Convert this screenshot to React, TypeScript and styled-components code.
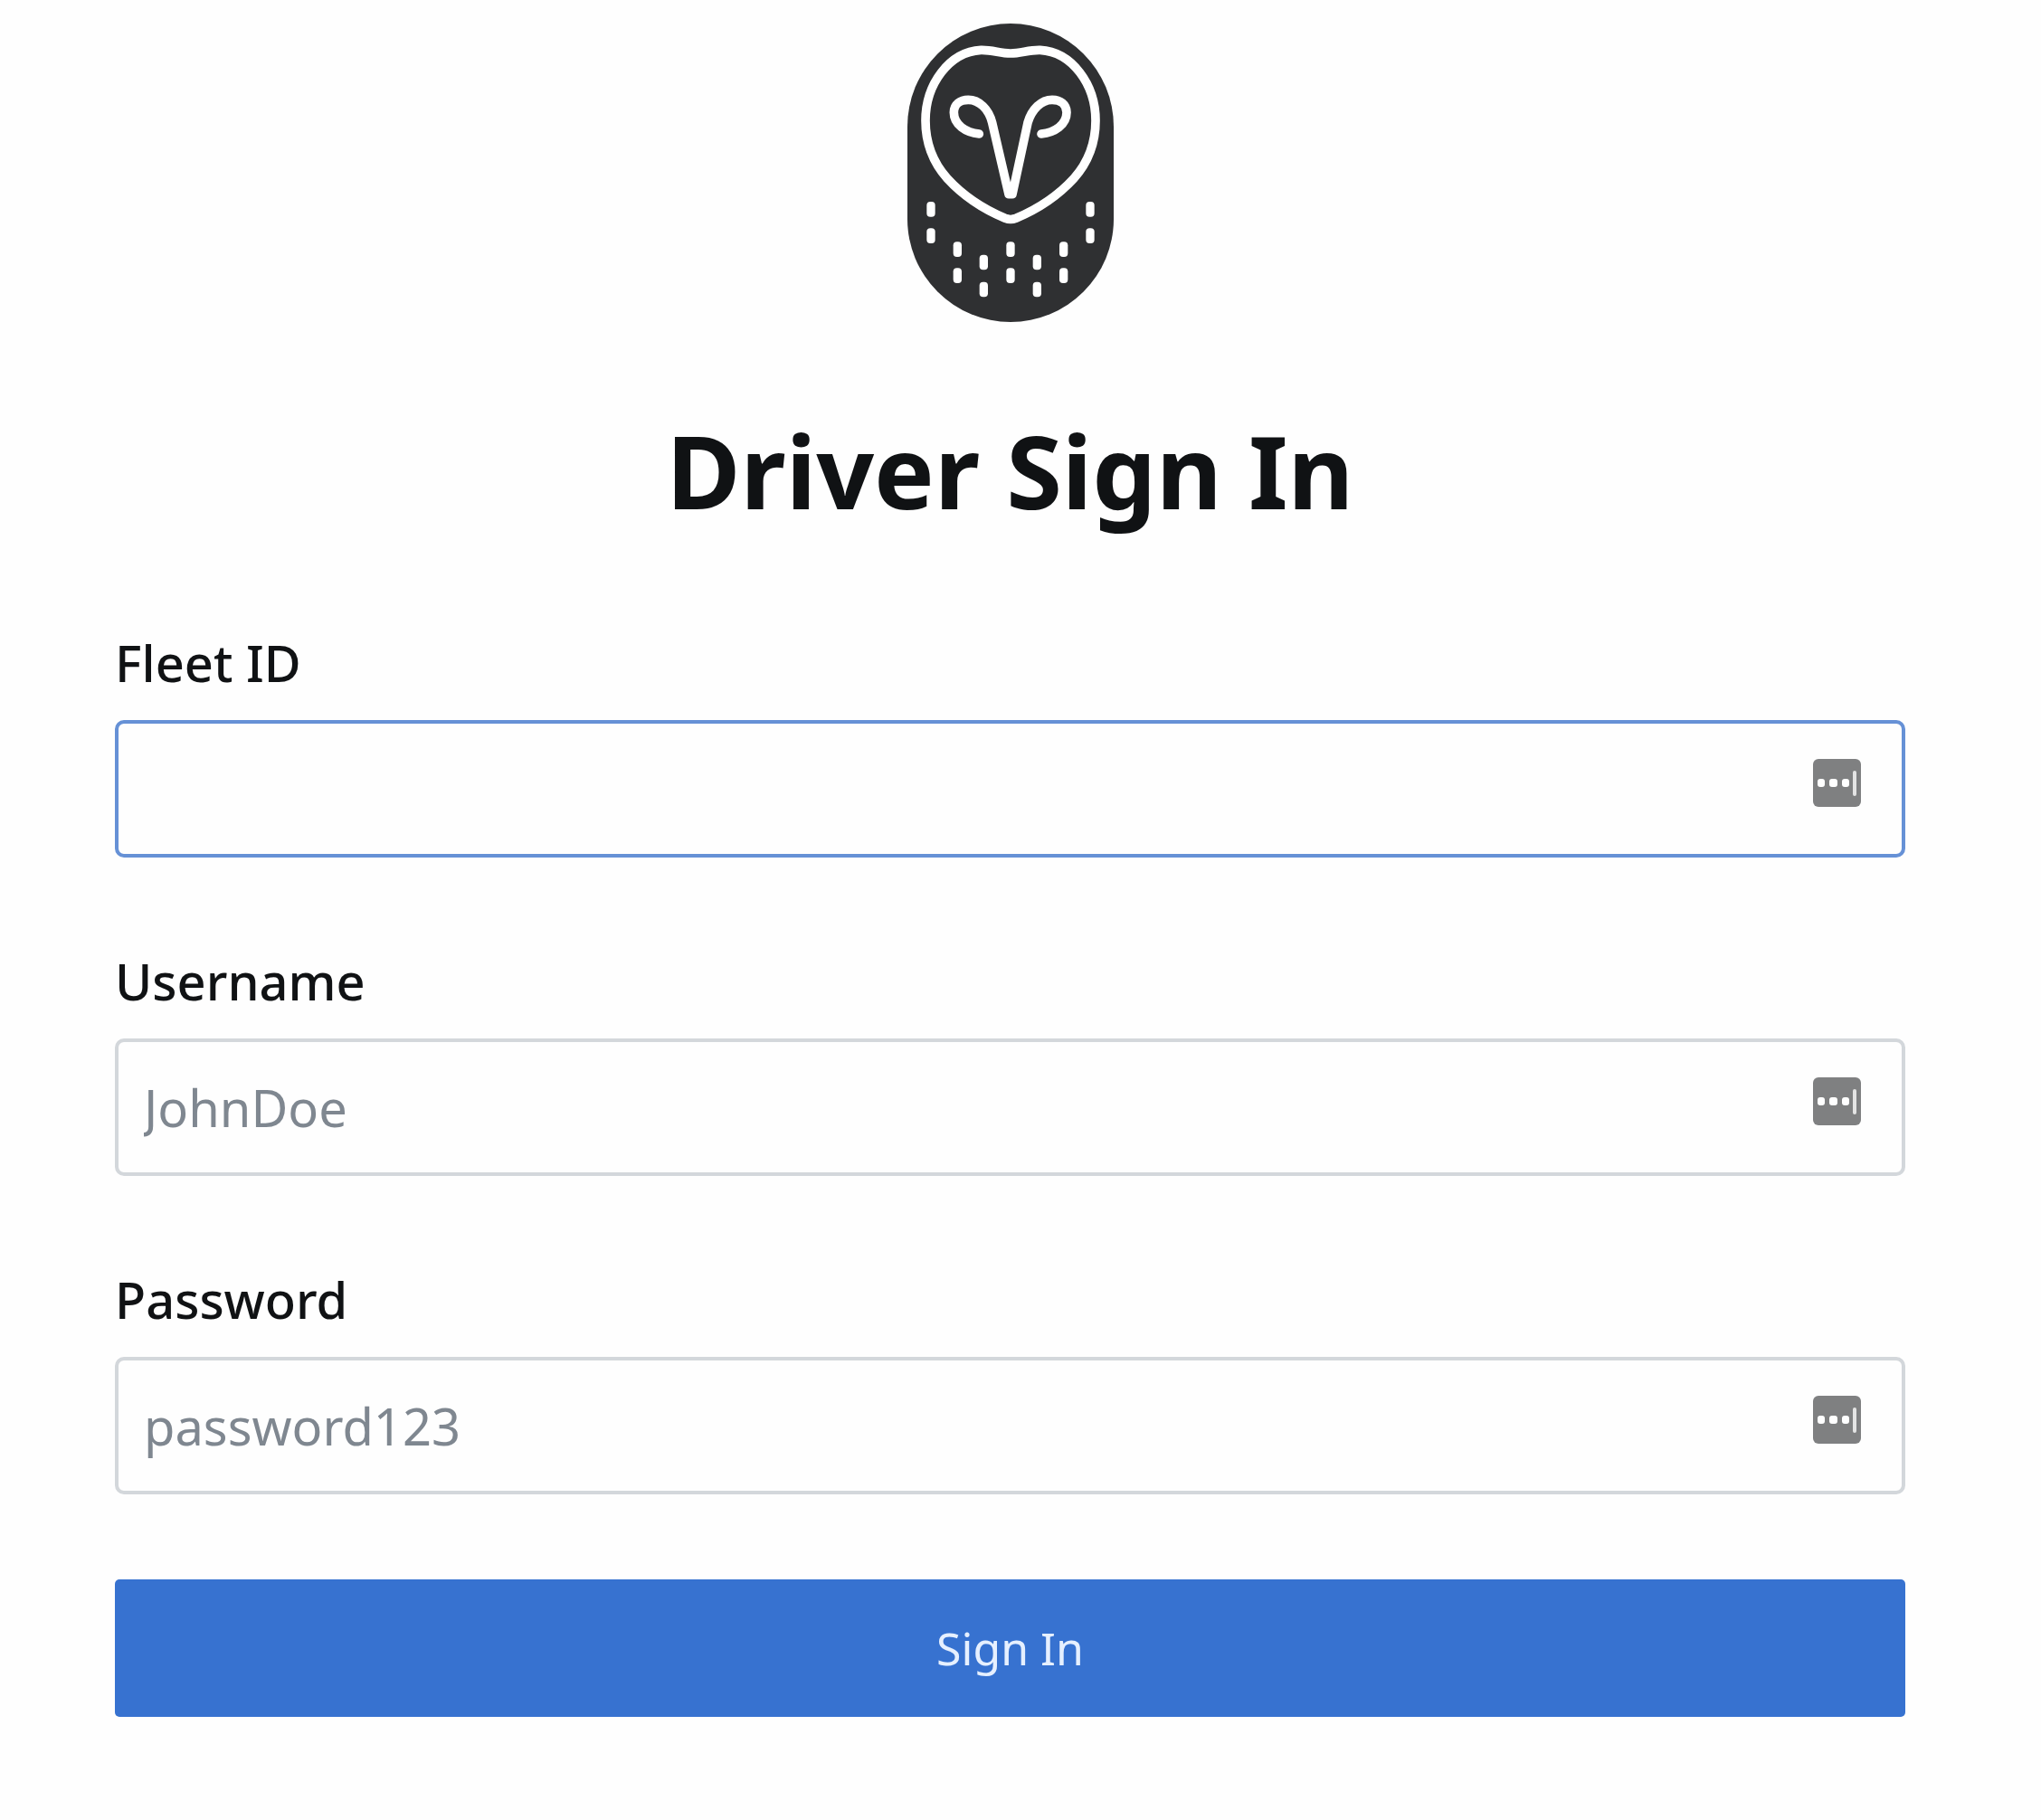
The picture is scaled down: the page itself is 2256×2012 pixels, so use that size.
import React from "react";
import styled, { createGlobalStyle } from "styled-components";

const GlobalStyle = createGlobalStyle`
  *, *::before, *::after {
    box-sizing: border-box;
  }
  body {
    margin: 0;
    background: #fefefe;
    color: #101214;
    font-family: "Noto Sans", "Open Sans", sans-serif;
  }
`;

const Page = styled.main`
  display: flex;
  flex-direction: column;
  align-items: center;
  padding: 26px 150px 112px 127px;
`;

const Logo = styled.svg`
  display: block;
  width: 228px;
  height: 330px;
  margin-bottom: 98px;
`;

const Title = styled.h1`
  margin: 0 0 114px;
  font-size: 112px;
  line-height: 132px;
  font-weight: 700;
  text-align: center;
`;

const Form = styled.form`
  display: flex;
  flex-direction: column;
  gap: 94px;
  width: 100%;
`;

const Fields = styled.div`
  display: flex;
  flex-direction: column;
  gap: 104px;
`;

const Field = styled.div`
  display: flex;
  flex-direction: column;
  gap: 32px;
`;

const Label = styled.label`
  font-size: 56px;
  line-height: 64px;
  font-weight: 500;
`;

const InputWrap = styled.div`
  position: relative;
  display: flex;
`;

const Input = styled.input<{ $active?: boolean }>`
  flex: 1;
  min-width: 0;
  height: 152px;
  padding: 0 136px 0 28px;
  border: 4px solid ${(p) => (p.$active ? "#6691d6" : "#d3d7db")};
  border-radius: 10px;
  outline: none;
  background: #fefefe;
  color: #101214;
  font-family: inherit;
  font-size: 56px;

  &::placeholder {
    color: #7f8790;
    opacity: 1;
  }
`;

const AutofillButton = styled.button`
  position: absolute;
  top: 43px;
  right: 49px;
  width: 53px;
  height: 53px;
  padding: 0;
  border: 0;
  background: none;
  cursor: pointer;

  svg {
    display: block;
    width: 100%;
    height: 100%;
  }
`;

const SubmitButton = styled.button`
  height: 152px;
  border: 0;
  border-radius: 5px;
  background: #3772d0;
  color: #e6f0ff;
  font-family: inherit;
  font-size: 50px;
  cursor: pointer;
`;

const feathers: [number, number][] = [
  [146, 664], [146, 752],
  [234, 797], [234, 884],
  [321, 840], [321, 930],
  [410, 797], [410, 884],
  [498, 840], [498, 930],
  [586, 797], [586, 884],
  [674, 664], [674, 752],
];

function OwlLogo() {
  return (
    <Logo viewBox="68 48 684 990" role="img" aria-label="Owl">
      <rect x="68" y="48" width="684" height="990" rx="342" fill="#2f3032" />
      <g fill="none" stroke="#fff" strokeWidth="29" strokeLinecap="round" strokeLinejoin="round">
        <path d="M410 147 C375 147 350 135 312 136 C206 142 128 250 128 370 C128 440 152 508 200 562 C255 622 325 666 392 694 Q410 701 428 694 C495 666 565 622 620 562 C668 508 692 440 692 370 C692 250 614 142 508 136 C470 135 445 147 410 147 Z" />
        <path d="M306 414 C262 410 222 384 222 343 C222 316 243 301 270 301 C306 301 338 332 349 377 L404 614 L416 614 L467 377 C480 332 512 301 548 301 C575 301 596 316 596 343 C596 384 556 410 512 414" />
      </g>
      <g fill="#fff">
        {feathers.map(([x, y]) => (
          <rect key={`${x}-${y}`} x={x - 14} y={y - 25} width="28" height="50" rx="12" />
        ))}
      </g>
    </Logo>
  );
}

function AutofillIcon() {
  return (
    <svg viewBox="0 0 53 53" aria-hidden="true">
      <rect width="53" height="53" rx="6" fill="#7f8081" />
      <g fill="#fff">
        <rect x="5" y="22" width="8" height="9" rx="3" />
        <rect x="18" y="22" width="9" height="9" rx="3" />
        <rect x="32" y="22" width="8" height="9" rx="3" />
        <rect x="44" y="13" width="4" height="28" rx="2" fill="#e4e4e4" />
      </g>
    </svg>
  );
}

interface TextFieldProps {
  id: string;
  label: string;
  type?: string;
  placeholder?: string;
  active?: boolean;
}

function TextField({ id, label, type = "text", placeholder, active }: TextFieldProps) {
  return (
    <Field>
      <Label htmlFor={id}>{label}</Label>
      <InputWrap>
        <Input id={id} name={id} type={type} placeholder={placeholder} $active={active} />
        <AutofillButton type="button" aria-label={`Fill ${label}`}>
          <AutofillIcon />
        </AutofillButton>
      </InputWrap>
    </Field>
  );
}

export default function App() {
  return (
    <>
      <GlobalStyle />
      <Page>
        <OwlLogo />
        <Title>Driver Sign In</Title>
        <Form onSubmit={(e) => e.preventDefault()}>
          <Fields>
            <TextField id="fleet-id" label="Fleet ID" active />
            <TextField id="username" label="Username" placeholder="JohnDoe" />
            <TextField id="password" label="Password" type="password" placeholder="password123" />
          </Fields>
          <SubmitButton type="submit">Sign In</SubmitButton>
        </Form>
      </Page>
    </>
  );
}
